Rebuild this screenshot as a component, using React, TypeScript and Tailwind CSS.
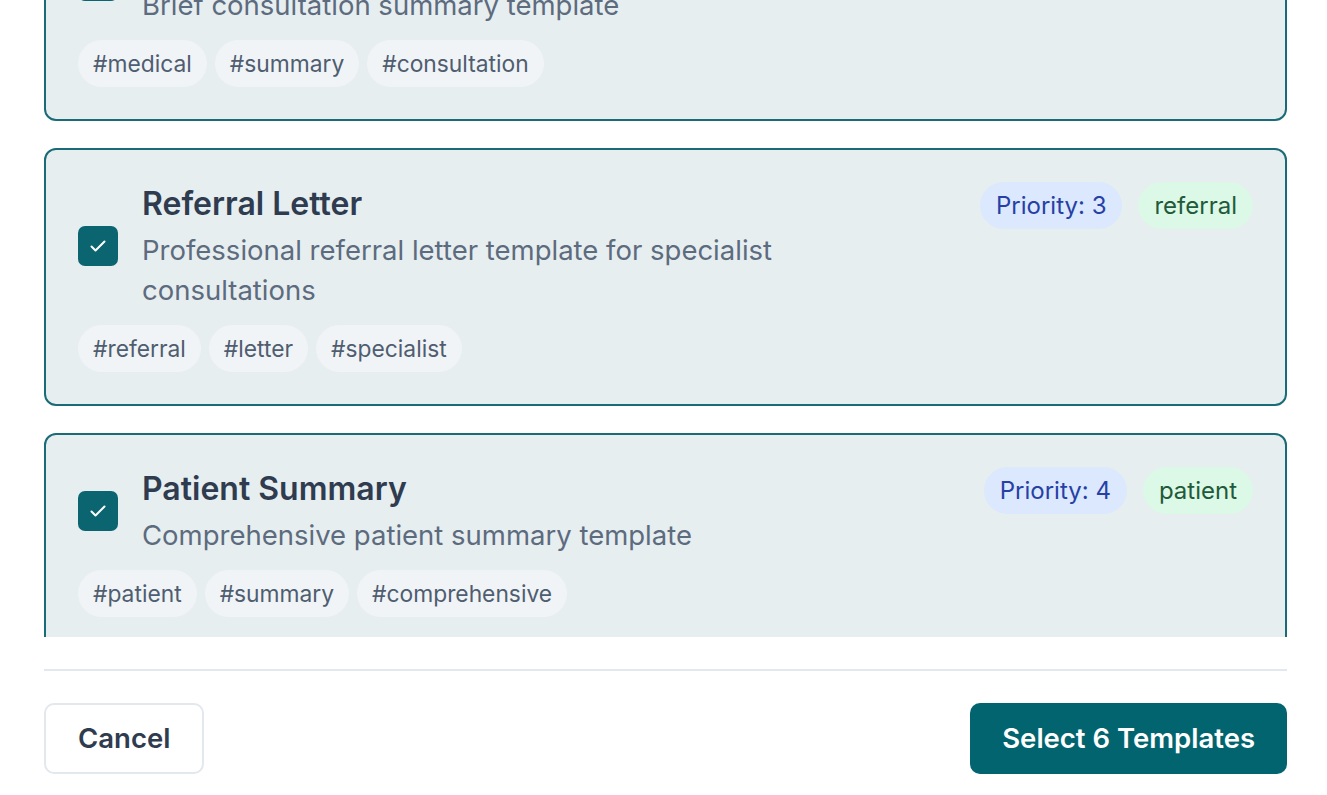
import React from 'react';

interface Template {
  id: string;
  title: string;
  description: string;
  priority: number;
  category: string;
  tags: string[];
}

const templates: Template[] = [
  {
    id: 'consult',
    title: 'Consultation Summary',
    description: 'Brief consultation summary template',
    priority: 2,
    category: 'consultation',
    tags: ['medical', 'summary', 'consultation'],
  },
  {
    id: 'referral',
    title: 'Referral Letter',
    description: 'Professional referral letter template for specialist consultations',
    priority: 3,
    category: 'referral',
    tags: ['referral', 'letter', 'specialist'],
  },
  {
    id: 'patient',
    title: 'Patient Summary',
    description: 'Comprehensive patient summary template',
    priority: 4,
    category: 'patient',
    tags: ['patient', 'summary', 'comprehensive'],
  },
];

function CheckBox() {
  return (
    <div className="flex h-10 w-10 shrink-0 items-center justify-center rounded-[7px] bg-[#0b6571]">
      <svg width="24" height="24" viewBox="0 0 24 24" fill="none" stroke="white" strokeWidth="2" strokeLinecap="round" strokeLinejoin="round">
        <path d="M5.5 12.5l4 4L18.5 7.5" />
      </svg>
    </div>
  );
}

function TemplateCard({ t }: { t: Template }) {
  return (
    <div className="rounded-xl border-2 border-[#1a6b78] bg-[#e7eef0] p-8">
      <div className="flex items-start justify-between">
        <div className="flex items-center gap-6">
          <CheckBox />
          <div className="max-w-[700px]">
            <h3 className="mb-1 text-[32px] font-semibold leading-[44px] text-[#2f3c4f]">{t.title}</h3>
            <p className="text-[27.5px] leading-10 text-[#5d6b7e]">{t.description}</p>
          </div>
        </div>
        <div className="flex items-center gap-4">
          <span className="rounded-full bg-[#dbe8fd] px-4 py-2.5 text-2xl leading-[27px] text-[#2640a6]">
            Priority: {t.priority}
          </span>
          <span className="rounded-full bg-[#dcf8e6] px-4 py-2.5 text-2xl leading-[27px] text-[#215a3a]">
            {t.category}
          </span>
        </div>
      </div>
      <div className="mt-[15px] flex gap-2">
        {t.tags.map((tag) => (
          <span key={tag} className="rounded-full bg-[#f0f4f6] px-[15px] py-2.5 text-[22.8px] leading-[27px] text-[#4f5d70]">
            #{tag}
          </span>
        ))}
      </div>
    </div>
  );
}

export default function App() {
  return (
    <div className="h-[795px] overflow-hidden bg-white pl-[44px] pr-[40px] font-['Inter',sans-serif]">
      <div className="h-[637px] overflow-hidden">
        <div className="-mt-[97px] flex flex-col gap-[27px]">
          {templates.map((t) => (
            <TemplateCard key={t.id} t={t} />
          ))}
        </div>
      </div>
      <div className="mt-8 flex items-center justify-between border-t-2 border-[#e3e8ee] pt-8">
        <button className="h-[71px] rounded-[10px] border-2 border-[#e3e8ee] bg-white px-[32px] text-[27.5px] font-semibold text-[#2f3c4f]">
          Cancel
        </button>
        <button className="h-[71px] rounded-[10px] bg-[#02646f] px-8 text-[27.5px] font-semibold text-white">
          Select 6 Templates
        </button>
      </div>
    </div>
  );
}
